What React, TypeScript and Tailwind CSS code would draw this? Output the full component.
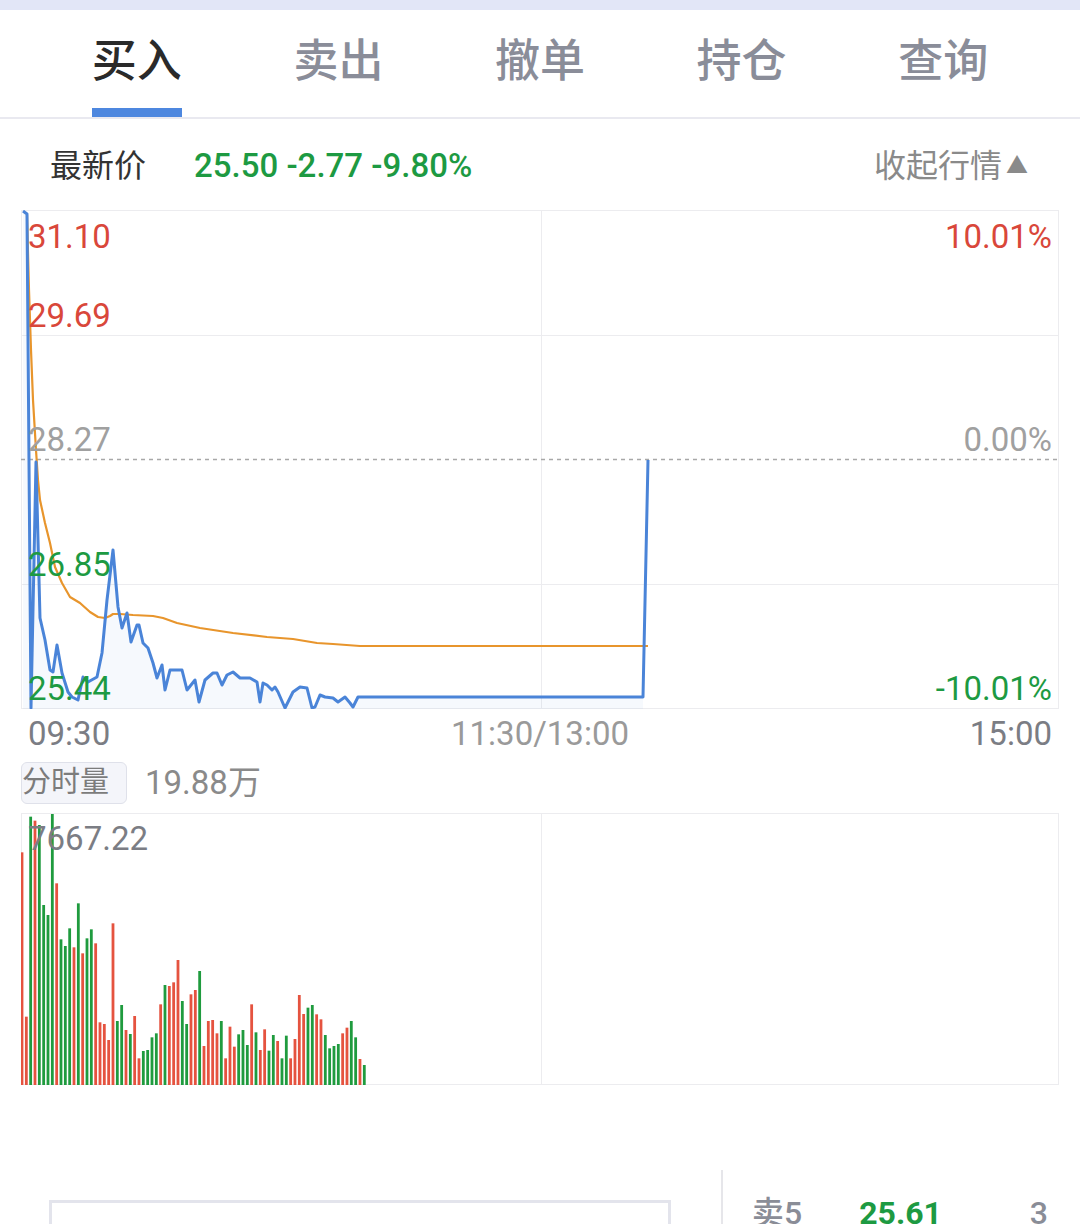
const tabs = ['买入', '卖出', '撤单', '持仓', '查询'];

// blue price line, page coords
const pricePts: [number, number][] = [
  [23, 211], [27, 214], [31, 708], [36, 462], [40, 618], [45, 640], [50, 670], [53, 672], [57, 645],
  [62, 673], [68, 692], [72, 697], [78, 700], [83, 677], [88, 682], [97, 677], [102, 653], [107, 600],
  [113, 550], [118, 607], [122, 628], [127, 613], [131, 642], [137, 625], [139, 625], [143, 643],
  [148, 648], [153, 663], [157, 678], [162, 665], [165, 690], [170, 670], [182, 670], [187, 690],
  [195, 680], [199, 702], [205, 680], [213, 673], [217, 673], [222, 685], [227, 675], [233, 672],
  [240, 678], [250, 678], [257, 682], [260, 702], [263, 683], [267, 685], [272, 690], [275, 687],
  [278, 692], [285, 708], [293, 692], [300, 687], [307, 688], [312, 708], [315, 707], [320, 695],
  [325, 697], [333, 698], [338, 702], [345, 697], [350, 703], [353, 707], [358, 697], [643, 697],
  [648, 460],
];

const avgPts: [number, number][] = [
  [27, 215], [29, 290], [31, 350], [33, 400], [36, 450], [38, 480], [40, 500], [45, 523], [50, 543],
  [55, 567], [62, 583], [70, 597], [80, 603], [90, 612], [98, 617], [105, 618], [110, 616], [113, 614],
  [120, 614], [133, 615], [153, 616], [163, 618], [177, 623], [200, 628], [233, 633], [267, 637],
  [293, 639], [317, 643], [333, 644], [360, 646], [648, 646],
];

// volume bar tops (in 3x crop units) and colours
const volTops = [
  337, 830, 230, 242, 255, 495, 525, 222, 430, 598, 618, 565, 622, 490, 640, 595, 568, 610, 847, 852,
  900, 550, 843, 795, 870, 882, 828, 955, 933, 930, 892, 880, 793, 735, 738, 727, 660, 783, 852, 763,
  750, 693, 918, 843, 840, 880, 843, 955, 860, 920, 883, 870, 915, 793, 877, 930, 868, 932, 885, 903,
  955, 887, 955, 897, 765, 822, 803, 795, 823, 838, 885, 925, 918, 912, 880, 863, 843, 892, 957, 975,
];
const volUp = 'RRGRGGGGRGGGRGRGGRRRRRGGRGRRGGGGRGRRRGGRRGRRRRGRRRGGGRGRRGGRGGRRRRGGRRGGGGRRGGRG';

const toPts = (pts: [number, number][]) => pts.map(([x, y]) => `${x},${y}`).join(' ');

function PriceChart() {
  const fill = `${toPts(pricePts.slice(0, -1))} 643,709 23,709`;
  return (
    <div className="relative ml-[21px] h-[499px] w-[1038px]">
      <svg className="absolute inset-0" width="1038" height="499" viewBox="21 210 1038 499">
        <rect x="21.5" y="210.5" width="1037" height="498" fill="none" stroke="#ececef" />
        <line x1="21" y1="335.5" x2="1059" y2="335.5" stroke="#ececef" />
        <line x1="21" y1="584.5" x2="1059" y2="584.5" stroke="#ececef" />
        <line x1="541.5" y1="210" x2="541.5" y2="709" stroke="#ececef" />
        <line x1="21" y1="459.5" x2="1059" y2="459.5" stroke="#a8a8a8" strokeWidth="1.5" strokeDasharray="4 4" />
        <polygon points={fill} fill="#4a86dc" fillOpacity="0.05" />
        <polyline points={toPts(avgPts)} fill="none" stroke="#e8952c" strokeWidth="2.2" strokeLinejoin="round" />
        <polyline points={toPts(pricePts)} fill="none" stroke="#4a84d8" strokeWidth="3" strokeLinejoin="round" />
      </svg>
      <span className="absolute left-[7px] top-[10px] text-[33px] leading-[33px] text-[#d9473a]">31.10</span>
      <span className="absolute left-[7px] top-[89px] text-[33px] leading-[33px] text-[#d9473a]">29.69</span>
      <span className="absolute left-[7px] top-[213px] text-[33px] leading-[33px] text-[#a0a0a0]">28.27</span>
      <span className="absolute left-[7px] top-[338px] text-[33px] leading-[33px] text-[#1d9a42]">26.85</span>
      <span className="absolute left-[7px] top-[462px] text-[33px] leading-[33px] text-[#1d9a42]">25.44</span>
      <span className="absolute right-[7px] top-[10px] text-[33px] leading-[33px] text-[#d9473a]">10.01%</span>
      <span className="absolute right-[7px] top-[213px] text-[33px] leading-[33px] text-[#a0a0a0]">0.00%</span>
      <span className="absolute right-[7px] top-[462px] text-[33px] leading-[33px] text-[#1d9a42]">-10.01%</span>
    </div>
  );
}

function VolumeChart() {
  return (
    <div className="relative ml-[21px] h-[272px] w-[1038px]">
      <svg className="absolute inset-0" width="1038" height="272" viewBox="21 813 1038 272">
        <rect x="21.5" y="813.5" width="1037" height="271" fill="none" stroke="#ececef" />
        <line x1="541.5" y1="813" x2="541.5" y2="1085" stroke="#ececef" />
        {volTops.map((t, i) => {
          const top = 740 + t / 3;
          return (
            <rect
              key={i}
              x={22 + i * 4.333 - 1.4}
              y={top}
              width="2.8"
              height={1085 - top}
              fill={volUp[i] === 'R' ? '#e5533f' : '#1f9b3e'}
            />
          );
        })}
      </svg>
      <span className="absolute left-[7px] top-[9px] text-[33px] leading-[33px] text-[#7b7d84]">7667.22</span>
    </div>
  );
}

export default function App() {
  return (
    <div
      className="h-[1224px] w-[1080px] overflow-hidden bg-white"
      style={{ fontFamily: 'Roboto, "Noto Sans CJK SC", sans-serif' }}
    >
      <div className="h-[10px] bg-[#e2e6f7]" />

      {/* tabs */}
      <div className="flex h-[109px] border-b-2 border-[#e9e9f0] px-[36px]">
        {tabs.map((t, i) => (
          <div key={t} className="relative flex flex-1 items-start justify-center pt-[23px]">
            <span
              className={`text-[45px] font-medium leading-[58px] ${i === 0 ? 'text-[#2a2a2a]' : 'text-[#8a8d99]'}`}
            >
              {t}
            </span>
            {i === 0 && <div className="absolute bottom-0 h-[9px] w-[90px] bg-[#4d87df]" />}
          </div>
        ))}
      </div>

      {/* latest price */}
      <div className="flex h-[91px] items-center pl-[50px] pr-[52px] pt-[2px]">
        <span className="text-[32px] text-[#333]">最新价</span>
        <span className="ml-[48px] text-[33px] font-medium text-[#1d9a42]">25.50 -2.77 -9.80%</span>
        <span className="ml-auto flex items-center text-[32px] text-[#8a8a8a]">
          收起行情
          <span className="ml-[4px] text-[22px] leading-none">▲</span>
        </span>
      </div>

      <PriceChart />

      {/* time axis */}
      <div className="flex h-[50px] items-center justify-between pl-[28px] pr-[28px] text-[33px]">
        <span className="text-[#7b7d84]">09:30</span>
        <span className="text-[#9a9a9a]">11:30/13:00</span>
        <span className="text-[#7b7d84]">15:00</span>
      </div>

      {/* volume header */}
      <div className="ml-[21px] mt-[3px] flex h-[42px] items-center">
        <div className="flex h-[42px] w-[106px] items-center rounded-[6px] border-[1.5px] border-[#dfe1ea] bg-[#f4f5fa] text-[29px] text-[#7c7c7c]">
          分时量
        </div>
        <span className="ml-[18px] text-[33px] text-[#8a8a8a]">19.88万</span>
      </div>

      <div className="h-[9px]" />
      <VolumeChart />

      {/* order form */}
      <div className="mt-[85px] flex">
        <div className="w-[721px] pl-[49px] pt-[30px]">
          <div className="h-[60px] w-[622px] border-[3px] border-[#e3e4ec]" />
        </div>
        <div className="flex flex-1 items-start border-l-2 border-[#e6e6ea] pl-[29px] pr-[32px] pt-[19px]">
          <span className="text-[32px] font-medium text-[#8a8d97]">卖5</span>
          <span className="ml-[57px] text-[32px] font-bold text-[#1d9a42]">25.61</span>
          <span className="ml-auto text-[32px] font-medium text-[#8a8d97]">3</span>
        </div>
      </div>
    </div>
  );
}
